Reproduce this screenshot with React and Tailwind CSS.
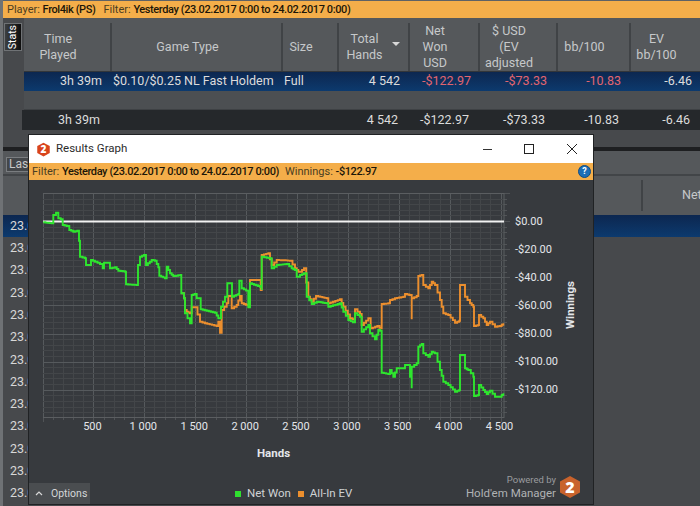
import React from "react";

const font = { fontFamily: 'Roboto, "Open Sans", sans-serif' };

const z3 = (a) => a.map(([x, y]) => [20 + x / 3, 190 + y / 3]);
const z4 = (a) => a.map(([x, y]) => [300 + x / 3, 190 + y / 3]);

const greenLeft = [[70,97],[95,100],[100,75],[108,68],[115,85],[122,88],[128,105],[140,108],[148,120],[160,125],[172,122],[177,152],[180,200],[195,205],[198,225],[208,225],[213,210],[225,215],[240,222],[248,235],[252,218],[262,218],[270,235],[285,232],[295,242],[315,245],[318,283],[350,285],[354,225],[360,200],[372,195],[378,225],[395,210],[405,212],[415,232],[418,257],[435,265],[440,230],[450,250],[460,258],[482,255],[484,310],[492,325],[495,370],[510,400],[515,315],[525,312],[530,325],[540,325],[542,358],[560,362],[585,368],[595,385],[603,350],[615,320],[622,280],[632,280],[636,320],[655,312],[658,272],[665,295],[685,305],[685,352],[690,280],[720,290],[725,300],[725,200],[748,205],[755,235],[770,225],[800,222],[815,235],[825,240],[830,260],[840,260]];
const greenRight = [[0,255],[12,250],[20,320],[35,342],[50,335],[80,340],[85,350],[120,340],[130,365],[145,390],[165,400],[165,370],[180,380],[185,425],[205,405],[210,430],[225,448],[235,420],[245,425],[245,548],[265,552],[270,540],[280,560],[290,535],[310,535],[315,525],[325,525],[335,595],[335,530],[350,520],[355,470],[365,462],[370,490],[385,500],[395,485],[405,490],[420,540],[430,575],[445,585],[465,605],[478,600],[480,495],[490,495],[495,535],[505,540],[520,560],[522,618],[535,615],[537,585],[550,600],[560,612],[570,602],[585,620],[600,620],[610,610]];
const orangeLeft = [[484,310],[492,325],[495,360],[500,365],[510,370],[515,352],[525,352],[540,395],[555,400],[590,408],[595,395],[600,428],[605,360],[620,340],[625,318],[635,318],[635,355],[650,345],[660,318],[665,340],[690,348],[690,270],[715,270],[722,300],[725,195],[745,190],[755,225],[770,210],[810,212],[825,235],[835,245]];
const orangeRight = [[0,245],[12,235],[25,320],[35,335],[48,318],[80,325],[85,340],[120,328],[130,350],[150,385],[165,390],[165,358],[180,372],[185,405],[205,385],[212,415],[232,408],[245,418],[245,342],[265,340],[270,330],[285,325],[310,320],[315,312],[328,315],[335,388],[335,325],[350,318],[355,258],[365,255],[370,285],[385,295],[395,275],[405,285],[420,330],[430,370],[445,375],[465,398],[478,392],[480,285],[490,285],[495,320],[510,340],[520,350],[522,408],[535,405],[537,375],[550,385],[560,405],[570,395],[585,410],[600,408],[610,400]];

// Turn a sampled curve into the stair-like trace of a per-hand result line.
function stepify(a) {
  const out = [a[0]];
  for (let i = 1; i < a.length; i++) {
    const [x0, y0] = a[i - 1];
    const [x1, y1] = a[i];
    const n = Math.max(1, Math.round(Math.abs(x1 - x0) / 2.2));
    for (let k = 1; k <= n; k++) {
      const x = x0 + ((x1 - x0) * k) / n;
      const y = y0 + ((y1 - y0) * k) / n;
      out.push([x, out[out.length - 1][1]]);
      out.push([x, y]);
    }
  }
  return out;
}

const pts = (a) => a.map(([x, y]) => `${x.toFixed(1)},${y.toFixed(1)}`).join(" ");
const green = stepify([...z3(greenLeft), ...z4(greenRight)]);
const orange = stepify([...z3(orangeLeft), ...z4(orangeRight)]);

const L = 42.5, R = 504, T = 193, B = 417;
const dx = 50.9 / 5, dy = 28.1 / 5;
const vMinor = Array.from({ length: 46 }, (_, i) => L + i * dx).filter((x) => x <= R);
const hMinor = Array.from({ length: 41 }, (_, i) => T + i * dy).filter((y) => y <= B);

function Plot() {
  return (
    <svg width="467" height="229" viewBox="43 193 467 229" className="shrink-0 block">
      {vMinor.map((x, i) => {
        const major = i % 5 === 0;
        const px = Math.round(x) + 0.5;
        return (
          <g key={i}>
            <line x1={px} x2={px} y1={T} y2={B} stroke={major ? "#565a5d" : "#434649"} />
            <line x1={px} x2={px} y1={B} y2={B + (major ? 5 : 3)} stroke="#505356" />
          </g>
        );
      })}
      {hMinor.map((y, i) => {
        const major = i % 5 === 0;
        const py = Math.round(y) + 0.5;
        return (
          <g key={i}>
            <line x1={L} x2={R} y1={py} y2={py} stroke={major ? "#565a5d" : "#434649"} />
            <line x1={R} x2={R + (major ? 6 : 3)} y1={py} y2={py} stroke="#505356" />
          </g>
        );
      })}
      <rect x={L} y={T + 0.5} width={R - L} height={B - T} fill="none" stroke="#5b5e61" />
      <line x1={L} x2={R} y1="221.5" y2="221.5" stroke="#f2f2f2" strokeWidth="2" />
      <polyline points={pts(orange)} fill="none" stroke="#ec8f2e" strokeWidth="1.9" />
      <polyline points={pts(green)} fill="none" stroke="#2ee62e" strokeWidth="1.9" />
    </svg>
  );
}

function Hex({ size, fill, className }) {
  return (
    <svg width={size} height={size} viewBox="0 0 24 24" className={className}>
      <polygon points="12,1 22,6.5 22,17.5 12,23 2,17.5 2,6.5" fill={fill} />
      <text x="12" y="17.5" textAnchor="middle" fontSize="16" fontWeight="800" fill="#fff" fontFamily="Open Sans, sans-serif">2</text>
    </svg>
  );
}

const cols = "grid grid-cols-[86px_171px_56px_71px_70px_78px_73px_71px]";

function Head({ children, border = true, arrow = false }) {
  return (
    <div className={`relative flex h-full items-center justify-center text-center leading-[16px] pr-[18px] ${border ? "border-l-2 border-[#404346]" : ""}`}>
      {children}
      {arrow && (
        <svg width="8" height="5" viewBox="0 0 8 5" className="absolute right-[8px] top-[19px]"><polygon points="0,0 8,0 4,4" fill="#d8d8d8" /></svg>
      )}
    </div>
  );
}

const Red = "text-[#e2656f]";

function Row({ className, red, right }) {
  const r = red ? Red : "";
  return (
    <div className={`${cols} items-center h-[20px] text-[12.5px] text-[#dcdcdc] ${className}`}>
      <div className="text-right pr-[8px]">3h 39m</div>
      <div className="pl-[3px] whitespace-nowrap">{right ? "$0.10/$0.25 NL Fast Holdem" : ""}</div>
      <div className="pl-[3px]">{right ? "Full" : ""}</div>
      <div className="text-right pr-[8px]">4 542</div>
      <div className={`text-right pr-[7px] ${r}`}>-$122.97</div>
      <div className={`text-right pr-[9px] ${r}`}>-$73.33</div>
      <div className={`text-right pr-[8px] ${r}`}>-10.83</div>
      <div className="text-right pr-[8px]">-6.46</div>
    </div>
  );
}

const dates = Array.from({ length: 13 });

export default function App() {
  return (
    <div style={font} className="relative w-[700px] h-[506px] overflow-hidden bg-[#47494c] border-l-[3px] border-[#6f7275]">
      {/* Top bar */}
      <div className="h-[18px] -ml-[3px] border-t border-[#5f6265] bg-[#f4ae4a] flex items-center pl-[7px] gap-[8px] text-[11px] leading-none whitespace-nowrap text-[#4a3d22]">
        <span>Player: <b className="font-medium text-[#1c1608] tracking-[-0.4px]">Frol4ik (PS)</b></span>
        <span>Filter: <b className="font-medium text-[#1c1608] tracking-[-0.4px]">Yesterday (23.02.2017 0:00 to 24.02.2017 0:00)</b></span>
      </div>

      {/* Stats section */}
      <div className="flex h-[129px]">
        <div className="w-[21px] shrink-0 pt-[5px] pl-[1px]">
          <div className="w-[18px] h-[28px] flex items-center justify-center bg-gradient-to-r from-[#3c3f42] to-[#0e0e0e] border border-[#6f7275]">
            <span className="[writing-mode:vertical-rl] rotate-180 text-[10.5px] leading-none text-white">Stats</span>
          </div>
        </div>
        <div className="flex-1 min-w-0">
          <div className={`${cols} h-[53px] bg-[#55585b] text-[12.5px] text-[#c6c8ca] py-[5px]`}>
            <Head border={false}>Time<br />Played</Head>
            <Head>Game Type</Head>
            <Head>Size</Head>
            <Head arrow>Total<br />Hands</Head>
            <Head>Net<br />Won<br />USD</Head>
            <Head>$ USD<br />(EV<br />adjusted</Head>
            <Head>bb/100</Head>
            <Head>EV<br />bb/100</Head>
          </div>
          <Row right red className="bg-gradient-to-b from-[#0c2750] to-[#0c3a6e] border-t border-[#33363a]" />
          <div className="h-[19px] bg-[#4c4f52] border-b border-[#3e4144]" />
          <div className="-ml-[2px] bg-[#25282b]">
            <Row />
          </div>
        </div>
      </div>

      {/* Separator */}
      <div className="h-[4px] bg-[#1e1f21]" />

      {/* Lower section */}
      <div className="h-[25px] bg-[#55585b] border-b-2 border-[#424548] pt-[6px] pl-[3px]">
        <div className="w-[24px] h-[15px] border border-[#7a7d80] bg-[#44474a] text-[12px] leading-[13px] text-[#c8c8c8] pl-[2px] overflow-hidden">Last</div>
      </div>
      <div className="h-[39px] bg-[#55585b] flex items-center py-[4px]">
        <div className="ml-[638px] h-full border-l-2 border-[#404346] pl-[39px] flex items-center text-[12.5px] text-[#c6c8ca]">Net</div>
      </div>
      <div>
        {dates.map((_, i) => (
          <div
            key={i}
            className={`h-[22.3px] pl-[7px] flex items-center text-[12.5px] text-[#d8d8d8] ${i === 0 ? "bg-gradient-to-b from-[#0c2750] to-[#0c3a6e]" : ""}`}
          >
            23.02.2017
          </div>
        ))}
      </div>

      {/* Results Graph window */}
      <div className="absolute left-[25px] top-[134px] w-[566px] h-[371px] flex flex-col border border-[#202224] bg-[#373a3e]">
        <div className="h-[28px] shrink-0 bg-white flex items-center text-[#222]">
          <Hex size={15} fill="#d9441c" className="ml-[7px] mr-[5px]" />
          <span className="text-[11.5px] text-[#2b2b2b]">Results Graph</span>
          <svg width="120" height="14" viewBox="0 0 120 14" className="ml-auto mr-[5px]">
            <line x1="15" x2="24" y1="7.5" y2="7.5" stroke="#333" />
            <rect x="56.5" y="2.5" width="9" height="9" fill="none" stroke="#222" strokeWidth="1" />
            <path d="M99 2 L109 12 M109 2 L99 12" stroke="#222" fill="none" />
          </svg>
        </div>
        <div className="h-[17px] shrink-0 bg-[#f4ae4a] flex items-center pl-[3px] pr-[2px] text-[11px] leading-none whitespace-nowrap text-[#4a3d22] gap-[6px]">
          <span>Filter: <b className="font-medium text-[#1c1608] tracking-[-0.4px]">Yesterday (23.02.2017 0:00 to 24.02.2017 0:00)</b></span>
          <span>Winnings: <b className="font-medium text-[#1c1608] tracking-[-0.4px]">-$122.97</b></span>
          <span className="ml-auto w-[13px] h-[13px] rounded-full bg-[#1f6fb5] border border-[#0f4c85] text-white text-[9px] font-bold flex items-center justify-center">?</span>
        </div>

        <div className="flex-1 min-h-0 flex flex-col pt-[13px] pl-[14px] text-[#e4e6ea]">
          <div className="flex">
            <Plot />
            <div className="pl-[5px] pt-[15px] w-[53px] shrink-0 text-[11px]">
              {["$0.00", "-$20.00", "-$40.00", "-$60.00", "-$80.00", "-$100.00", "-$120.00"].map((t) => (
                <div key={t} className="h-[28.1px] flex items-center whitespace-nowrap">{t}</div>
              ))}
            </div>
            <div className="w-[16px] flex items-center justify-center">
              <span className="[writing-mode:vertical-rl] rotate-180 text-[11.5px] font-bold mt-[-6px]">Winnings</span>
            </div>
          </div>
          <div className="flex pl-[24px] -mt-[3px] text-[11px]">
            {["500", "1 000", "1 500", "2 000", "2 500", "3 000", "3 500", "4 000", "4 500"].map((t) => (
              <div key={t} className="w-[50.9px] text-center whitespace-nowrap">{t}</div>
            ))}
          </div>
          <div className="w-[461px] text-center text-[11.5px] font-bold mt-[9px]">Hands</div>

          <div className="mt-auto -ml-[14px] flex items-end h-[34px]">
            <div className="w-[61px] h-[21px] bg-[#4a4d50] flex items-center text-[10.5px] text-[#d4d6d8]">
              <svg width="8" height="5" viewBox="0 0 8 5" className="ml-[6px] mr-[8px] shrink-0"><path d="M1 4 L4 1 L7 4" fill="none" stroke="#d8d8d8" strokeWidth="1.2" /></svg>
              Options
            </div>
            <div className="ml-[145px] h-[21px] flex items-center text-[11.5px] text-[#d0d2d4] gap-[6px]">
              <span className="w-[6px] h-[6px] bg-[#2fe02f]" />
              <span>Net Won</span>
              <span className="w-[6px] h-[6px] bg-[#ec8f2e] ml-[1px]" />
              <span>All-In EV</span>
            </div>
            <div className="ml-auto flex items-center gap-[2px] mr-[11px] mb-[4px]">
              <div className="text-right text-[#9a9c9e]">
                <div className="text-[9.5px] leading-[12px]">Powered by</div>
                <div className="text-[11.5px] leading-[14px] text-[#b0b2b4]">Hold'em Manager</div>
              </div>
              <Hex size={24} fill="#c8622c" />
            </div>
          </div>
        </div>
      </div>
    </div>
  );
}
